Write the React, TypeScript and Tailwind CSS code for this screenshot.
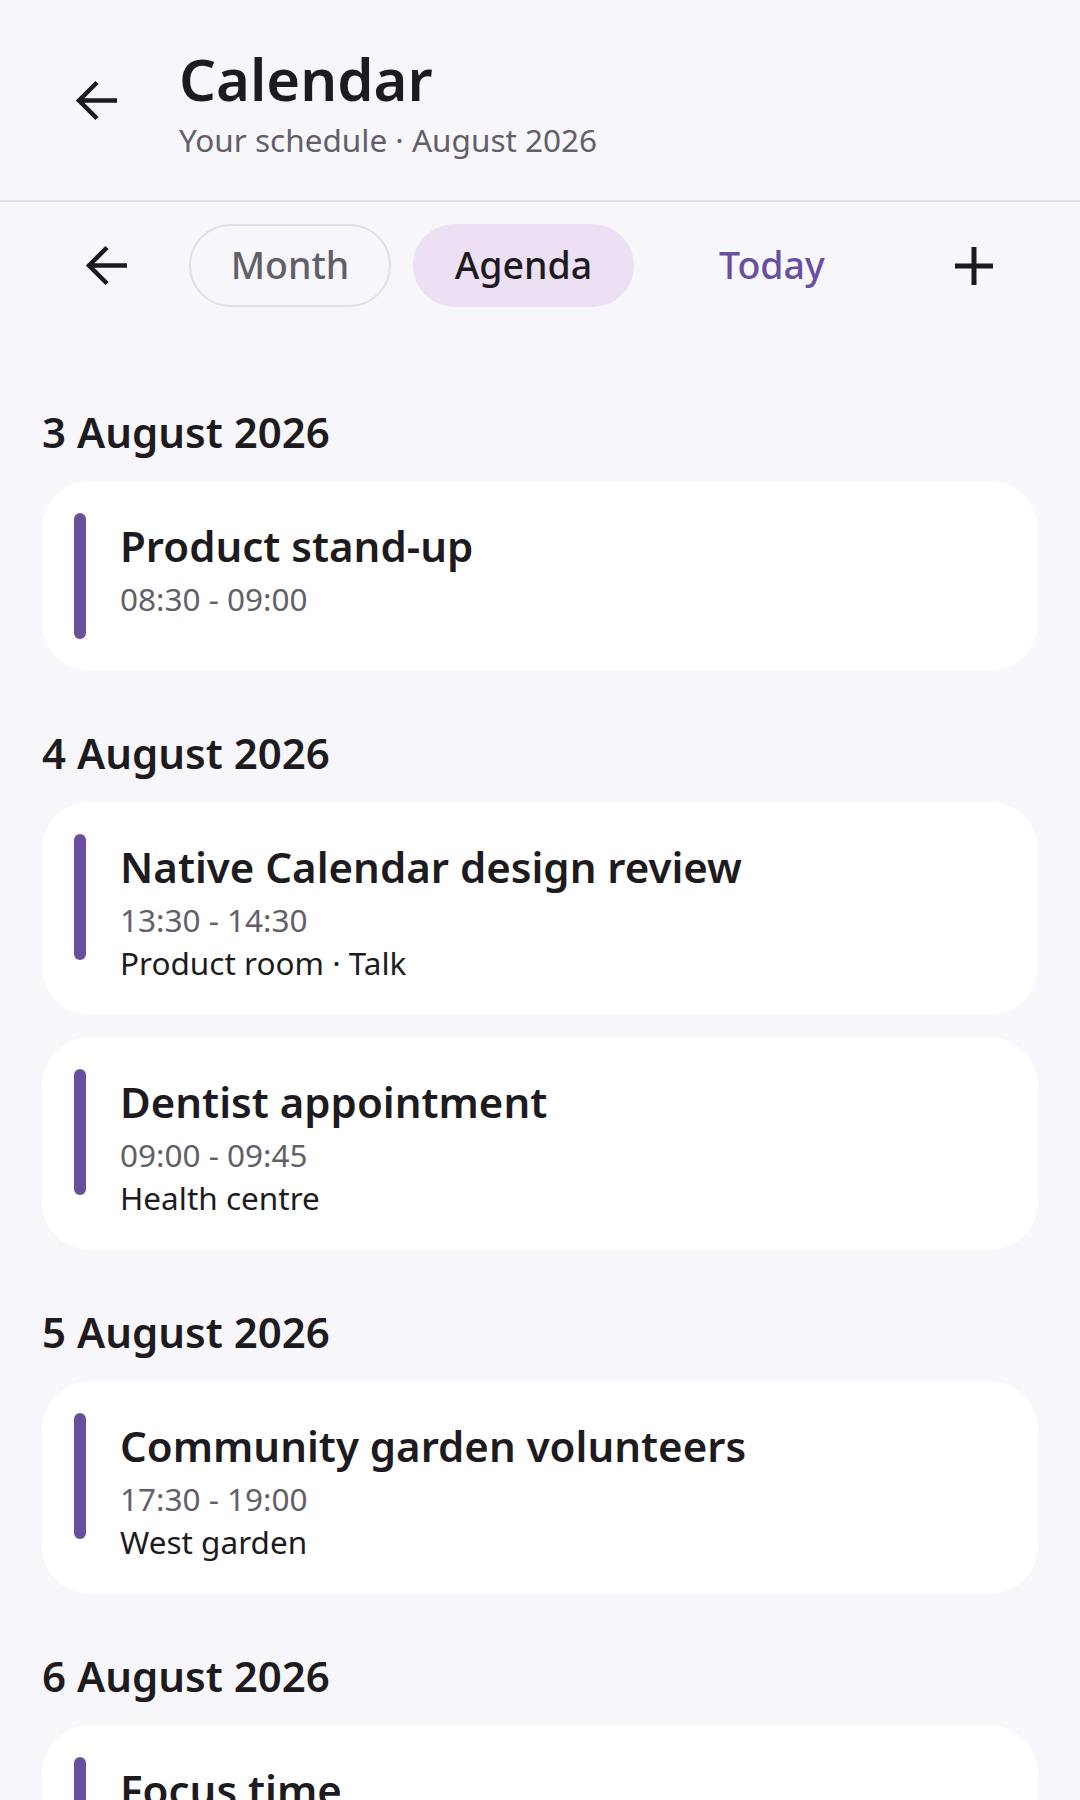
type AgendaEvent = {
  title: string;
  time: string;
  place?: string;
};

type AgendaDay = {
  date: string;
  events: AgendaEvent[];
};

const days: AgendaDay[] = [
  {
    date: "3 August 2026",
    events: [{ title: "Product stand-up", time: "08:30 - 09:00" }],
  },
  {
    date: "4 August 2026",
    events: [
      {
        title: "Native Calendar design review",
        time: "13:30 - 14:30",
        place: "Product room · Talk",
      },
      {
        title: "Dentist appointment",
        time: "09:00 - 09:45",
        place: "Health centre",
      },
    ],
  },
  {
    date: "5 August 2026",
    events: [
      {
        title: "Community garden volunteers",
        time: "17:30 - 19:00",
        place: "West garden",
      },
    ],
  },
  {
    date: "6 August 2026",
    events: [{ title: "Focus time", time: "10:00 - 12:00" }],
  },
];

function BackArrow() {
  return (
    <svg width="42" height="41" viewBox="0 0 42 41" fill="none">
      <path
        d="M42 20.5H4M22 2.5L4 20.5l18 18"
        stroke="#1d1b20"
        strokeWidth="4.5"
        strokeLinecap="butt"
        strokeLinejoin="miter"
      />
    </svg>
  );
}

function PlusIcon() {
  return (
    <svg width="38" height="38" viewBox="0 0 38 38" fill="none">
      <path d="M19 0v38M0 19h38" stroke="#1d1b20" strokeWidth="5" />
    </svg>
  );
}

function EventCard({ event }: { event: AgendaEvent }) {
  return (
    <div className="flex items-start rounded-[48px] bg-white p-8">
      <div className="h-[126px] w-3 shrink-0 rounded-full bg-[#6a4fa0]" />
      <div className="ml-[34px] pt-2">
        <div className="text-[42px] leading-[50px] font-semibold text-[#1d1b20]">
          {event.title}
        </div>
        <div className="mt-2 text-[31.5px] leading-[40px] text-[#625f68]">
          {event.time}
        </div>
        {event.place && (
          <div className="mt-[3px] text-[31.5px] leading-[40px] text-[#1d1b20]">
            {event.place}
          </div>
        )}
      </div>
    </div>
  );
}

export default function App() {
  return (
    <div className="min-h-[1800px] bg-[#f7f6fa] font-['Noto_Sans','Open_Sans',sans-serif]">
      {/* Header */}
      <div className="flex h-[202px] items-start border-b-2 border-[#e3e1e7]">
        <button className="ml-[75px] mt-[80px]">
          <BackArrow />
        </button>
        <div className="ml-[62px] mt-[45px]">
          <h1 className="text-[58px] leading-[68px] font-semibold text-[#1d1b20]">
            Calendar
          </h1>
          <p className="mt-[7px] text-[31.5px] leading-[40px] text-[#625f68]">
            Your schedule · August 2026
          </p>
        </div>
      </div>

      {/* Toolbar */}
      <div className="flex items-center pt-[22px]">
        <button className="ml-[85px]">
          <BackArrow />
        </button>
        <button className="ml-[62px] flex h-[83px] w-[202px] items-center justify-center rounded-full border-2 border-[#e2e0e5] text-[37.5px] font-medium text-[#625f68]">
          Month
        </button>
        <button className="ml-[22px] flex h-[83px] w-[221px] items-center justify-center rounded-full bg-[#eddff4] text-[37.5px] font-medium text-[#1d1b20]">
          Agenda
        </button>
        <button className="ml-[85px] text-[37.5px] font-medium text-[#67509f]">
          Today
        </button>
        <button className="ml-[130px]">
          <PlusIcon />
        </button>
      </div>

      {/* Agenda list */}
      <div className="mt-[100px] flex flex-col gap-[57px] px-[42px]">
        {days.map((day) => (
          <section key={day.date}>
            <h2 className="mb-6 text-[42px] leading-[50px] font-semibold text-[#1d1b20]">
              {day.date}
            </h2>
            <div className="flex flex-col gap-[22px]">
              {day.events.map((ev) => (
                <EventCard key={ev.title} event={ev} />
              ))}
            </div>
          </section>
        ))}
      </div>
    </div>
  );
}
